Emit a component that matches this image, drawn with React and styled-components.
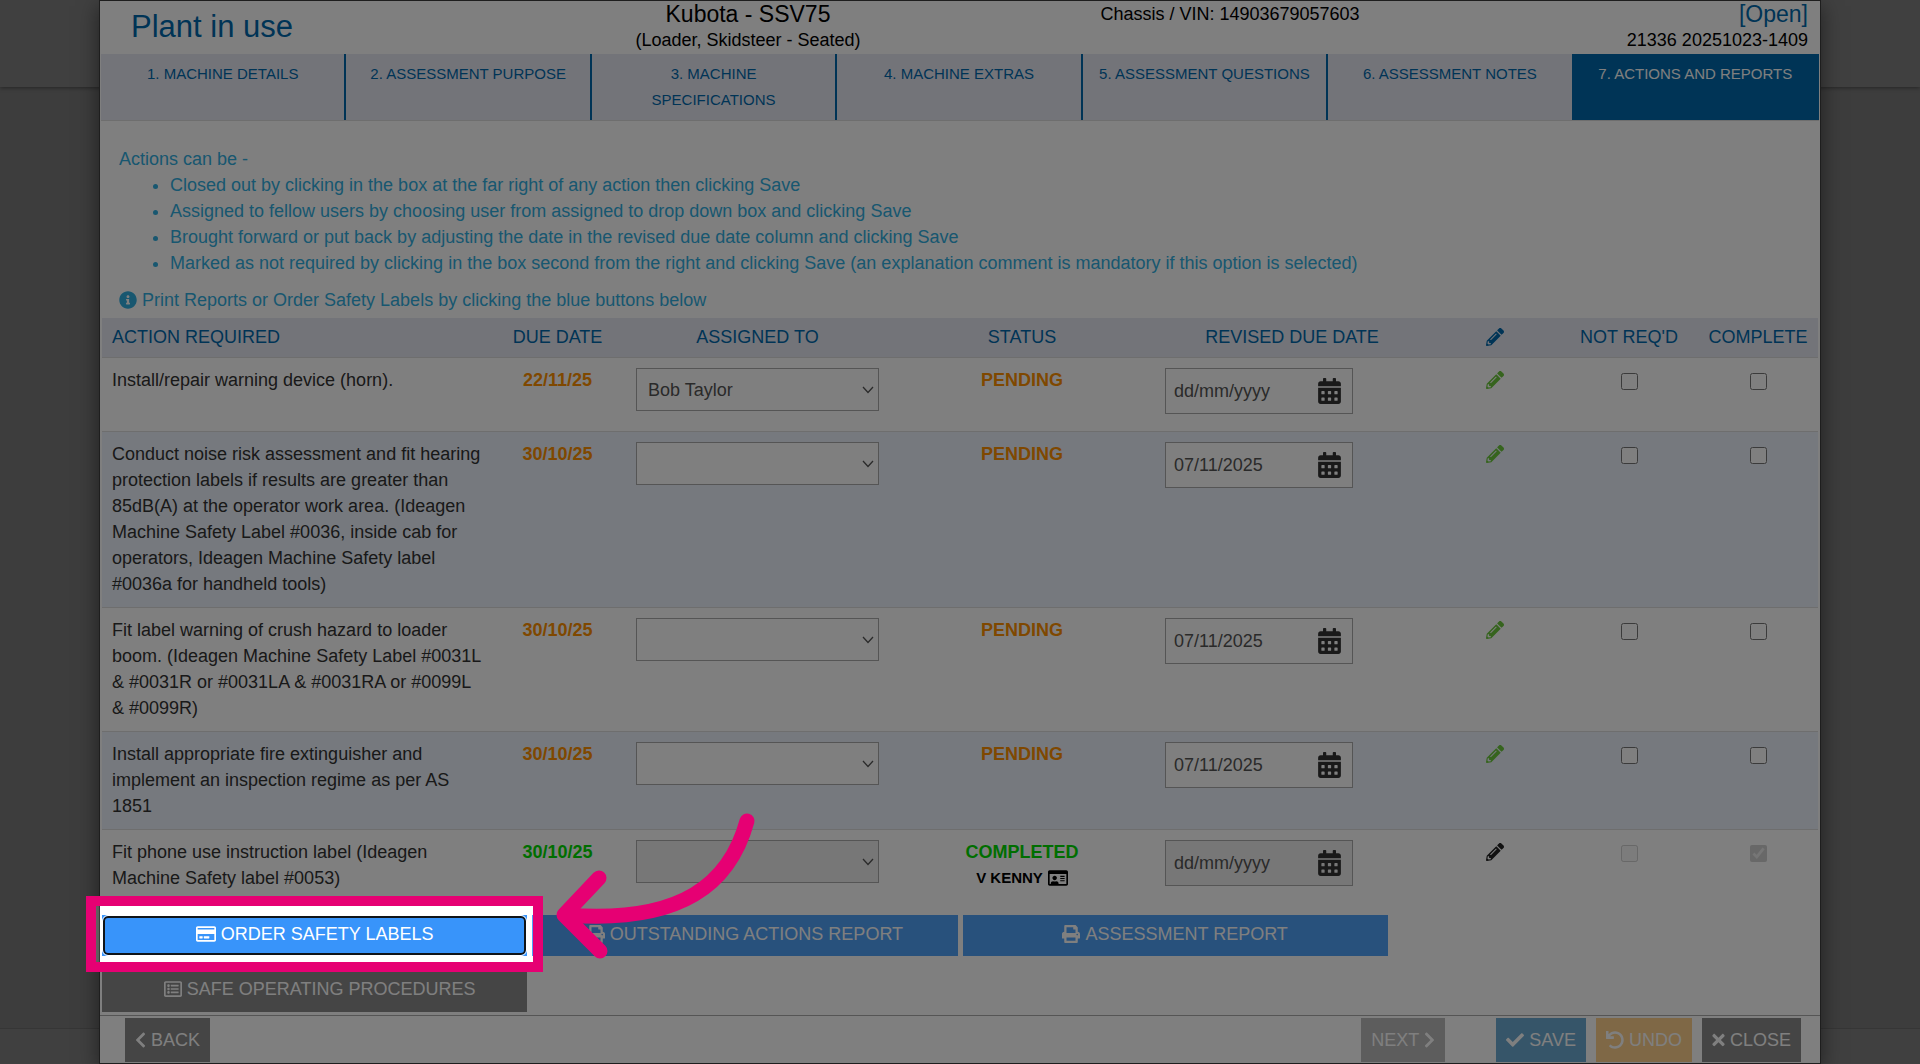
import React, { useState } from "react";
import styled, { createGlobalStyle } from "styled-components";
import {
  FaInfoCircle,
  FaPencilAlt,
  FaCalendarAlt,
  FaRegIdCard,
  FaRegCreditCard,
  FaPrint,
  FaRegListAlt,
  FaChevronLeft,
  FaChevronRight,
  FaCheck,
  FaUndo,
  FaTimes,
} from "react-icons/fa";

const GlobalStyle = createGlobalStyle`
  * {
    box-sizing: border-box;
  }

  body {
    margin: 0;
    background: #7a7a7a;
    color: #333;
    font-family: "Liberation Sans", Arial, sans-serif;
    font-size: 18px;
    line-height: 26px;
  }

  button, input, select {
    font: inherit;
    margin: 0;
  }
`;

const Page = styled.div`
  position: relative;
  min-height: 100vh;
  display: flex;
  flex-direction: column;
  overflow: hidden;
`;

const PageTop = styled.div`
  height: 87px;
  background: #808080;
  box-shadow: 0 1px 4px rgba(0, 0, 0, 0.4);
`;

const PageBody = styled.div`
  flex: 1;
`;

const PageBottom = styled.div`
  height: 36px;
  background: #808080;
  border-top: 1px solid #6c6c6c;
`;

// the dialog lies over the page
const Overlay = styled.div`
  position: absolute;
  inset: 0;
  padding: 0 99px;
  display: flex;
`;

const Dialog = styled.div`
  flex: 1;
  display: flex;
  flex-direction: column;
  background: #fff;
  border: 1px solid #3c3c3c;
  box-shadow: 0 6px 20px rgba(0, 0, 0, 0.5);
`;

const Header = styled.header`
  display: grid;
  grid-template-columns: 388fr 520fr 444fr 368fr;
  min-height: 53px;
  color: #000;
  text-align: center;
`;

const Title = styled.h1`
  margin: 0;
  padding-left: 31px;
  color: #0069ac;
  font-size: 31px;
  font-weight: normal;
  line-height: 52px;
  text-align: left;
`;

const HeaderCell = styled.div`
  padding-right: ${({ $end }) => ($end ? "12px" : "0")};
  text-align: ${({ $end }) => ($end ? "right" : "center")};
`;

const HeaderLine = styled.div`
  font-size: ${({ $big }) => ($big ? "23px" : "18px")};
`;

const OpenLink = styled.a`
  color: #0069ac;
  text-decoration: none;
`;

const Tabs = styled.nav`
  display: grid;
  grid-template-columns: repeat(7, 1fr);
  margin: 0 1px;
  border-bottom: 1px solid #ddd;
`;

const Tab = styled.button`
  display: flex;
  justify-content: center;
  min-height: 66px;
  padding: 7px 15px;
  border: none;
  border-right: 2px solid #0069ac;
  background: ${({ $active }) => ($active ? "#0069ac" : "#e7e9f3")};
  color: ${({ $active }) => ($active ? "#fff" : "#0069ac")};
  font-size: 15px;
  text-transform: uppercase;
  cursor: pointer;
`;

const Content = styled.main`
  flex: 1;
  padding: 25px 2px 3px;
`;

const Help = styled.div`
  padding: 0 17px 5px;
  color: #31aee0;

  p {
    margin: 0;
  }

  ul {
    margin: 0 0 11px;
    padding-left: 51px;
  }
`;

const HelpNote = styled.p`
  display: flex;
  align-items: center;
  gap: 5px;
`;

const ActionTable = styled.table`
  width: 100%;
  margin-bottom: 12px;
  border-spacing: 0;
  table-layout: fixed;
`;

const Th = styled.th`
  height: 39px;
  padding: 0 ${({ $left }) => ($left ? "10px" : "0")} 2px;
  background: #e7e9f3;
  color: #0069ac;
  font-weight: normal;
  text-align: ${({ $left }) => ($left ? "left" : "center")};
  text-transform: uppercase;

  svg {
    display: block;
    margin: 0 auto;
  }
`;

const Row = styled.tr`
  background: ${({ $shaded }) => ($shaded ? "#ecf2fc" : "#fff")};
`;

const Td = styled.td`
  height: 74px;
  padding: 9px ${({ $left }) => ($left ? "5px" : "10px")} 10px 10px;
  border-top: 1px solid #ddd;
  vertical-align: top;
  text-align: ${({ $left }) => ($left ? "left" : "center")};
`;

const Strong = styled.div`
  color: ${({ $done }) => ($done ? "#00dc00" : "#ff9000")};
  font-weight: bold;
`;

const Signed = styled.div`
  display: flex;
  justify-content: center;
  align-items: center;
  gap: 5px;
  color: #000;
  font-size: 15px;
  font-weight: bold;

  svg {
    width: 20px;
    height: 18px;
  }
`;

const Field = styled.div`
  position: relative;
  width: ${({ $width }) => $width || "100%"};
  margin-top: 1px;
`;

const FieldIcon = styled.span`
  position: absolute;
  top: 0;
  bottom: 0;
  right: ${({ $right }) => $right}px;
  display: flex;
  align-items: center;
  color: ${({ $color }) => $color};
  pointer-events: none;
`;

const CalendarIcon = styled(FaCalendarAlt)`
  width: 23px;
  height: 26px;
`;

const Select = styled.select`
  display: block;
  width: 100%;
  height: 43px;
  padding: 0 30px 0 11px;
  border: 1px solid #aaa;
  border-radius: 0;
  background: ${({ disabled }) => (disabled ? "#eee" : "#fff")};
  color: #555;
  opacity: 1;
  appearance: none;
`;

const DateInput = styled.input`
  display: block;
  width: 100%;
  height: 46px;
  padding: 0 40px 0 8px;
  border: 1px solid #aaa;
  background: ${({ disabled }) => (disabled ? "#eee" : "#fff")};
  color: #555;

  &::placeholder {
    color: #555;
    opacity: 1;
  }
`;

const EditButton = styled.button`
  display: flex;
  align-items: center;
  height: 26px;
  margin: 0 auto;
  padding: 0;
  border: none;
  background: none;
  color: ${({ disabled }) => (disabled ? "#222" : "#6cc83c")};
`;

const Checkbox = styled.input`
  display: block;
  width: 17px;
  height: 17px;
  margin: 6px auto 0;
`;

const ButtonGrid = styled.div`
  display: grid;
  grid-template-columns: repeat(4, 1fr);
  gap: 12px 5px;
`;

const ReportButton = styled.button`
  position: relative;
  display: flex;
  justify-content: center;
  align-items: center;
  gap: 5px;
  width: 100%;
  min-height: ${({ $grey }) => ($grey ? "44px" : "41px")};
  padding: 0 12px 3px ${({ $grey }) => ($grey ? "22px" : "12px")};
  border: none;
  background: ${({ $grey, $focused }) =>
    $grey ? "#8a8a8a" : $focused ? "#3894fa" : "#50a2f8"};
  color: #fff;
  text-transform: uppercase;

  svg {
    width: ${({ $iconWidth }) => $iconWidth || 18}px;
    height: 18px;
  }

  /* focus ring drawn inside the button */
  &::after {
    content: ${({ $focused }) => ($focused ? '""' : "none")};
    position: absolute;
    inset: 0;
    border: 1px solid #fff;
    border-radius: 6px;
    box-shadow: inset 0 0 0 2px #101418;
  }
`;

const Highlighted = styled.div`
  position: relative;
`;

const Spotlight = styled.div`
  position: absolute;
  z-index: 5;
  inset: -19px -16px -16px;
  border: 10px solid #e60073;
  box-shadow: 0 0 0 9999px rgba(0, 0, 0, 0.5);
  pointer-events: none;
`;

const Arrow = styled.svg`
  position: absolute;
  z-index: 6;
  left: calc(100% + 23px);
  top: -104px;
  pointer-events: none;
`;

const Footer = styled.footer`
  display: flex;
  gap: 10px;
  padding: 2px 19px 2px 25px;
  border-top: 1px solid #aaa;
`;

const Spacer = styled.div`
  flex: 1;
`;

const FooterButton = styled.button`
  display: flex;
  align-items: center;
  gap: 5px;
  min-height: 44px;
  margin-right: ${({ $apart }) => ($apart ? "41px" : "0")};
  padding: 0 10px;
  border: none;
  background: ${({ $color }) => $color};
  color: #fff;
  text-transform: uppercase;

  svg {
    width: ${({ $iconWidth }) => $iconWidth || 18}px;
    height: 18px;
  }
`;

const tabs = [
  "1. Machine Details",
  "2. Assessment Purpose",
  "3. Machine Specifications",
  "4. Machine Extras",
  "5. Assessment Questions",
  "6. Assessment Notes",
  "7. Actions and Reports",
];

const columnWidths = [387, 137, 263, 266, 274, 131, 138, 120];

const actions = [
  {
    id: 1,
    text: "Install/repair warning device (horn).",
    due: "22/11/25",
    assigned: "Bob Taylor",
    revised: "",
  },
  {
    id: 2,
    text: "Conduct noise risk assessment and fit hearing protection labels if results are greater than 85dB(A) at the operator work area. (Ideagen Machine Safety Label #0036, inside cab for operators, Ideagen Machine Safety label #0036a for handheld tools)",
    due: "30/10/25",
    assigned: "",
    revised: "07/11/2025",
  },
  {
    id: 3,
    text: "Fit label warning of crush hazard to loader boom. (Ideagen Machine Safety Label #0031L & #0031R or #0031LA & #0031RA or #0099L & #0099R)",
    due: "30/10/25",
    assigned: "",
    revised: "07/11/2025",
  },
  {
    id: 4,
    text: "Install appropriate fire extinguisher and implement an inspection regime as per AS 1851",
    due: "30/10/25",
    assigned: "",
    revised: "07/11/2025",
  },
  {
    id: 5,
    text: "Fit phone use instruction label (Ideagen Machine Safety label #0053)",
    due: "30/10/25",
    assigned: "",
    revised: "",
    signedBy: "V KENNY",
  },
];

const ActionRow = ({ action, shaded }) => {
  const [assigned, setAssigned] = useState(action.assigned);
  const [revised, setRevised] = useState(action.revised);
  const [notRequired, setNotRequired] = useState(false);
  const [complete, setComplete] = useState(Boolean(action.signedBy));
  const done = Boolean(action.signedBy);

  return (
    <Row $shaded={shaded}>
      <Td $left>{action.text}</Td>
      <Td>
        <Strong $done={done}>{action.due}</Strong>
      </Td>
      <Td>
        <Field>
          <Select
            aria-label="Assigned to"
            value={assigned}
            disabled={done}
            onChange={(e) => setAssigned(e.target.value)}
          >
            <option value=""></option>
            <option value="Bob Taylor">Bob Taylor</option>
          </Select>
          <FieldIcon $right={5} $color="#555">
            <svg width="12" height="8" viewBox="0 0 12 8" fill="none" stroke="currentColor" strokeWidth="1.3">
              <path d="M1 1l5 5.5L11 1" />
            </svg>
          </FieldIcon>
        </Field>
      </Td>
      <Td>
        <Strong $done={done}>{done ? "COMPLETED" : "PENDING"}</Strong>
        {done && (
          <Signed>
            {action.signedBy} <FaRegIdCard />
          </Signed>
        )}
      </Td>
      <Td>
        <Field $width="188px">
          <DateInput
            aria-label="Revised due date"
            placeholder="dd/mm/yyyy"
            value={revised}
            disabled={done}
            onChange={(e) => setRevised(e.target.value)}
          />
          <FieldIcon $right={12} $color="#333">
            <CalendarIcon />
          </FieldIcon>
        </Field>
      </Td>
      <Td>
        <EditButton aria-label="Edit comment" disabled={done}>
          <FaPencilAlt size={18} />
        </EditButton>
      </Td>
      <Td>
        <Checkbox
          type="checkbox"
          aria-label="Not required"
          checked={notRequired}
          disabled={done}
          onChange={(e) => setNotRequired(e.target.checked)}
        />
      </Td>
      <Td>
        <Checkbox
          type="checkbox"
          aria-label="Complete"
          checked={complete}
          disabled={done}
          onChange={(e) => setComplete(e.target.checked)}
        />
      </Td>
    </Row>
  );
};

const App = () => {
  const [activeTab, setActiveTab] = useState(6);

  return (
    <Page>
      <GlobalStyle />
      <PageTop />
      <PageBody />
      <PageBottom />
      <Overlay>
        <Dialog role="dialog" aria-label="Plant in use">
          <Header>
            <Title>Plant in use</Title>
            <HeaderCell>
              <HeaderLine $big>Kubota - SSV75</HeaderLine>
              <HeaderLine>(Loader, Skidsteer - Seated)</HeaderLine>
            </HeaderCell>
            <HeaderCell>
              <HeaderLine>Chassis / VIN: 14903679057603</HeaderLine>
            </HeaderCell>
            <HeaderCell $end>
              <HeaderLine $big>
                <OpenLink href="#open">[Open]</OpenLink>
              </HeaderLine>
              <HeaderLine>21336 20251023-1409</HeaderLine>
            </HeaderCell>
          </Header>
          <Tabs>
            {tabs.map((tab, index) => (
              <Tab key={tab} $active={index === activeTab} onClick={() => setActiveTab(index)}>
                {tab}
              </Tab>
            ))}
          </Tabs>
          <Content>
            <Help>
              <p>Actions can be -</p>
              <ul>
                <li>Closed out by clicking in the box at the far right of any action then clicking Save</li>
                <li>Assigned to fellow users by choosing user from assigned to drop down box and clicking Save</li>
                <li>Brought forward or put back by adjusting the date in the revised due date column and clicking Save</li>
                <li>
                  Marked as not required by clicking in the box second from the right and clicking Save (an explanation
                  comment is mandatory if this option is selected)
                </li>
              </ul>
              <HelpNote>
                <FaInfoCircle size={18} />
                Print Reports or Order Safety Labels by clicking the blue buttons below
              </HelpNote>
            </Help>
            <ActionTable>
              <colgroup>
                {columnWidths.map((width, index) => (
                  <col key={index} width={width} />
                ))}
              </colgroup>
              <thead>
                <tr>
                  <Th $left>Action Required</Th>
                  <Th>Due Date</Th>
                  <Th>Assigned To</Th>
                  <Th>Status</Th>
                  <Th>Revised Due Date</Th>
                  <Th aria-label="Comment">
                    <FaPencilAlt size={18} />
                  </Th>
                  <Th>Not Req'd</Th>
                  <Th>Complete</Th>
                </tr>
              </thead>
              <tbody>
                {actions.map((action, index) => (
                  <ActionRow key={action.id} action={action} shaded={index % 2 === 1} />
                ))}
              </tbody>
            </ActionTable>
            <ButtonGrid>
              <Highlighted>
                <ReportButton $focused $iconWidth={20}>
                  <FaRegCreditCard /> Order Safety Labels
                </ReportButton>
                <Spotlight />
                <Arrow width="210" height="155" viewBox="0 0 210 155" fill="none" stroke="#e60073" strokeLinecap="round" strokeLinejoin="round" strokeWidth="15">
                  <path d="M197 10C180 72 133 113 16 104" />
                  <path d="M49 67L14 104L50 140" />
                </Arrow>
              </Highlighted>
              <ReportButton>
                <FaPrint /> Outstanding Actions Report
              </ReportButton>
              <ReportButton>
                <FaPrint /> Assessment Report
              </ReportButton>
              <span />
              <ReportButton $grey>
                <FaRegListAlt /> Safe Operating Procedures
              </ReportButton>
            </ButtonGrid>
          </Content>
          <Footer>
            <FooterButton $color="#8a8a8a" $iconWidth={11}>
              <FaChevronLeft /> Back
            </FooterButton>
            <Spacer />
            <FooterButton $color="#bababa" $iconWidth={11} $apart>
              Next <FaChevronRight />
            </FooterButton>
            <FooterButton $color="#6caad2">
              <FaCheck /> Save
            </FooterButton>
            <FooterButton $color="#ffd08c">
              <FaUndo /> Undo
            </FooterButton>
            <FooterButton $color="#8a8a8a" $iconWidth={13}>
              <FaTimes /> Close
            </FooterButton>
          </Footer>
        </Dialog>
      </Overlay>
    </Page>
  );
};

export default App;
